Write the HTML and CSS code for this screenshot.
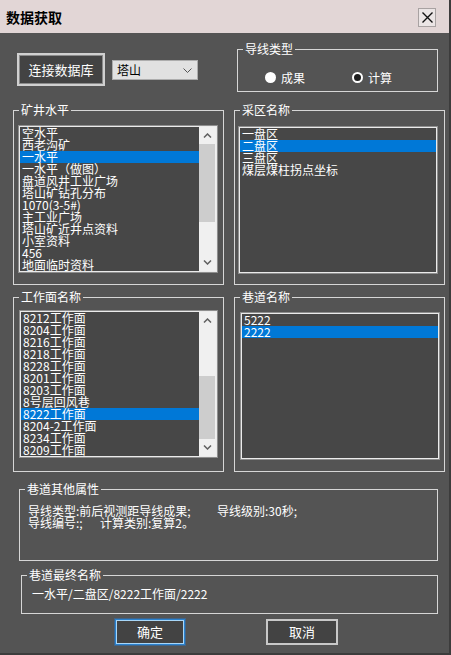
FILE: index.html
```html
<!DOCTYPE html>
<html lang="zh-CN">
<head>
<meta charset="utf-8">
<title>数据获取</title>
<link rel="stylesheet" href="styles.css">
</head>
<body>
<div class="window">
  <div class="titlebar">
    <span class="title">数据获取</span>
    <div class="close">
      <svg width="11" height="11" viewBox="0 0 11 11"><path d="M0.5 0.5 L10.5 10.5 M10.5 0.5 L0.5 10.5" stroke="#111" stroke-width="1.4" fill="none"/></svg>
    </div>
  </div>

  <div class="toprow">
    <button class="btn btn-connect">连接数据库</button>
    <div class="combo">
      <span>塔山</span>
      <svg width="9" height="5" viewBox="0 0 9 5"><path d="M0.5 0.5 L4.5 4.5 L8.5 0.5" stroke="#555" stroke-width="1" fill="none"/></svg>
    </div>
    <div class="group group-type">
      <span class="glabel">导线类型</span>
      <div class="radios">
        <label class="radio"><span class="dot dot-off"></span>成果</label>
        <label class="radio radio-2"><span class="dot dot-on"></span>计算</label>
      </div>
    </div>
  </div>

  <div class="row">
    <div class="group gbox">
      <span class="glabel">矿井水平</span>
      <div class="listbox lb-1">
        <div class="lb-inner">
          <ul class="items">
            <li>空水平</li>
            <li>西老沟矿</li>
            <li class="sel">一水平</li>
            <li>一水平（做图）</li>
            <li>盘道风井工业广场</li>
            <li>塔山矿钻孔分布</li>
            <li>1070(3-5#)</li>
            <li>主工业广场</li>
            <li>塔山矿近井点资料</li>
            <li>小室资料</li>
            <li>456</li>
            <li>地面临时资料</li>
          </ul>
          <div class="scrollbar">
            <div class="arrow"><svg width="9" height="5" viewBox="0 0 9 5"><path d="M1 4.5 L4.5 1 L8 4.5" stroke="#606060" stroke-width="1.5" fill="none"/></svg></div>
            <div class="track"><div class="thumb thumb-1"></div></div>
            <div class="arrow"><svg width="9" height="5" viewBox="0 0 9 5"><path d="M1 0.5 L4.5 4 L8 0.5" stroke="#606060" stroke-width="1.5" fill="none"/></svg></div>
          </div>
        </div>
      </div>
    </div>
    <div class="group gbox">
      <span class="glabel">采区名称</span>
      <div class="listbox lb-2">
        <div class="lb-inner">
          <ul class="items">
            <li>一盘区</li>
            <li class="sel">二盘区</li>
            <li>三盘区</li>
            <li>煤层煤柱拐点坐标</li>
          </ul>
        </div>
      </div>
    </div>
  </div>

  <div class="row">
    <div class="group gbox">
      <span class="glabel">工作面名称</span>
      <div class="listbox lb-3">
        <div class="lb-inner">
          <ul class="items">
            <li>8212工作面</li>
            <li>8204工作面</li>
            <li>8216工作面</li>
            <li>8218工作面</li>
            <li>8228工作面</li>
            <li>8201工作面</li>
            <li>8203工作面</li>
            <li>8号层回风巷</li>
            <li class="sel">8222工作面</li>
            <li>8204-2工作面</li>
            <li>8234工作面</li>
            <li>8209工作面</li>
          </ul>
          <div class="scrollbar">
            <div class="arrow"><svg width="9" height="5" viewBox="0 0 9 5"><path d="M1 4.5 L4.5 1 L8 4.5" stroke="#606060" stroke-width="1.5" fill="none"/></svg></div>
            <div class="track"><div class="thumb thumb-3"></div></div>
            <div class="arrow"><svg width="9" height="5" viewBox="0 0 9 5"><path d="M1 0.5 L4.5 4 L8 0.5" stroke="#606060" stroke-width="1.5" fill="none"/></svg></div>
          </div>
        </div>
      </div>
    </div>
    <div class="group gbox">
      <span class="glabel">巷道名称</span>
      <div class="listbox lb-4">
        <div class="lb-inner">
          <ul class="items">
            <li>5222</li>
            <li class="sel">2222</li>
          </ul>
        </div>
      </div>
    </div>
  </div>

  <div class="group group-attr">
    <span class="glabel">巷道其他属性</span>
    <div class="attr-line"><span class="seg seg-a">导线类型:前后视测距导线成果;</span><span>导线级别:30秒;</span></div>
    <div class="attr-line"><span class="seg seg-b">导线编号:;</span><span>计算类别:复算2。</span></div>
  </div>

  <div class="group group-final">
    <span class="glabel">巷道最终名称</span>
    <div class="final-text">一水平/二盘区/8222工作面/2222</div>
  </div>

  <div class="actions">
    <button class="btn btn-ok">确定</button>
    <button class="btn btn-cancel">取消</button>
  </div>
</div>
</body>
</html>
```

FILE: styles.css
```css
* { box-sizing: border-box; margin: 0; padding: 0; }

html, body { width: 451px; height: 655px; overflow: hidden; }

body {
  background: #3c3c3c;
  font-family: "Noto Sans CJK SC", "Noto Sans", sans-serif;
  font-size: 12px;
  color: #fff;
}

.window {
  width: 449px;
  height: 653px;
  background: #545454;
  display: flex;
  flex-direction: column;
}

/* title bar */
.titlebar {
  flex: none;
  height: 33px;
  background: #e2d6d6;
  display: flex;
  align-items: center;
  justify-content: space-between;
  padding: 0 13px 0 6px;
}
.title { font-size: 14px; font-weight: bold; color: #000; line-height: 16px; }
.close {
  width: 18px;
  height: 19px;
  border: 1px solid #a8a2a2;
  background: #ebe5e5;
  display: flex;
  align-items: center;
  justify-content: center;
  margin-top: 1px;
}

/* buttons */
.btn {
  font-family: inherit;
  font-size: 13px;
  color: #fff;
  background: #434343;
  display: flex;
  align-items: center;
  justify-content: center;
  line-height: 14px;
}
.btn-connect {
  margin-top: 20px;
  width: 88px;
  height: 33px;
  border: 2px solid #d0d0d0;
  box-shadow: inset 0 0 0 1px #8c8c8c;
}

/* top row */
.toprow {
  flex: none;
  height: 77px;
  display: flex;
  align-items: flex-start;
  padding-left: 17px;
}
.combo {
  margin: 27px 0 0 7px;
  width: 86px;
  height: 20px;
  background: #e1e1e1;
  border: 1px solid #adadad;
  color: #000;
  display: flex;
  align-items: center;
  justify-content: space-between;
  padding: 0 5px 0 4px;
  line-height: 14px;
}

/* group boxes */
.group {
  position: relative;
  border: 1px solid #d6d6d6;
}
.glabel {
  position: absolute;
  left: 5px;
  top: -8px;
  padding: 0 2px;
  background: #545454;
  line-height: 14px;
  font-size: 12px;
  color: #fff;
  white-space: nowrap;
}

.group-type {
  margin: 16px 0 0 39px;
  width: 201px;
  height: 43px;
}
.radios {
  display: flex;
  margin: 22px 0 0 27px;
}
.radio {
  display: flex;
  align-items: center;
  gap: 5px;
  line-height: 11px;
  height: 11px;
  font-size: 12px;
}
.radio-2 { margin-left: 47px; }
.dot {
  width: 11px;
  height: 11px;
  border-radius: 50%;
  background: #fff;
  display: inline-block;
}
.dot-on { background: #1e1e1e; border: 2.5px solid #fff; }

/* list rows */
.row {
  flex: none;
  display: flex;
  gap: 10px;
  padding-left: 13px;
}
.row + .row { margin-top: 12px; }
.gbox { width: 211px; height: 175px; }

.listbox {
  margin: 14px 5px 0 4px;
  height: 148px;
  border: 1px solid #8e8e8e;
}
.lb-2 { margin-top: 15px; margin-left: 3px; margin-right: 6px; }
.lb-3 { margin-top: 12px; margin-left: 5px; margin-right: 5px; }
.lb-4 { margin-top: 14px; margin-left: 5px; margin-right: 4px; }

.lb-inner {
  height: 100%;
  border: 1px solid #ebebeb;
  background: #474747;
  display: flex;
  overflow: hidden;
}
.items {
  flex: 1;
  list-style: none;
  min-width: 0;
}
.items li {
  height: 12px;
  line-height: 12px;
  padding-left: 2px;
  white-space: nowrap;
  font-size: 12px;
  color: #fff;
}
.items li.sel { background: #0078d7; }

.scrollbar {
  flex: none;
  width: 17px;
  background: #f0f0f0;
  display: flex;
  flex-direction: column;
}
.arrow {
  flex: none;
  height: 17px;
  display: flex;
  align-items: center;
  justify-content: center;
}
.track { flex: 1; }
.thumb { margin: 0 1px 0 0; background: #cdcdcd; }
.thumb-1 { height: 78px; }
.thumb-3 { margin-top: 47px; height: 63px; }

/* attributes */
.group-attr {
  flex: none;
  margin: 17px 0 0 19px;
  width: 419px;
  height: 72px;
  padding: 15px 0 0 8px;
}
.attr-line {
  display: flex;
  line-height: 12px;
  height: 12px;
  font-size: 12px;
  white-space: nowrap;
}
.seg { display: inline-block; }
.seg-a { width: 189px; }
.seg-b { width: 72px; }

.group-final {
  flex: none;
  margin: 14px 0 0 21px;
  width: 417px;
  height: 39px;
  padding: 12px 0 0 10px;
}
.final-text { line-height: 12px; font-size: 12px; white-space: nowrap; }

/* bottom buttons */
.actions {
  flex: none;
  display: flex;
  margin-top: 5px;
}
.btn-ok {
  margin-left: 115px;
  width: 70px;
  height: 26px;
  border: 1px solid #2b82cf;
  box-shadow: inset 0 0 0 1px #a8d6f7, 0 0 0 1px rgba(40,120,200,0.45);
}
.btn-cancel {
  margin-left: 81px;
  width: 72px;
  height: 26px;
  border: 2px solid #c8c8c8;
}
```
